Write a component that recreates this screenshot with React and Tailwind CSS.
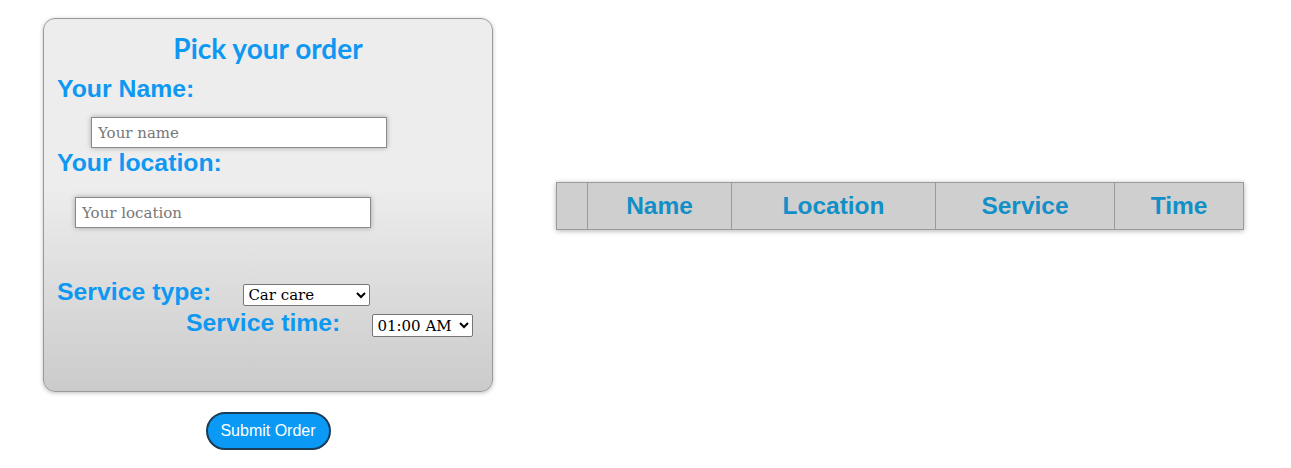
export default function App() {
  const label = "font-['Liberation_Sans',Arial,sans-serif] font-bold text-[24.8px] leading-[28px] text-[#0f98f2]";
  const th = "border border-[#9a9a9a] px-0 font-['Liberation_Sans',Arial,sans-serif] font-bold text-[24.5px] text-[#128fc6] text-center";
  return (
    <div className="flex items-start bg-white w-[1291px] h-[468px]">
      <div className="ml-[43px] mt-[18px] w-[450px] flex flex-col items-center">
        <div className="w-[450px] h-[374px] rounded-[12px] border border-[#999] shadow-[0_1px_4px_rgba(0,0,0,0.25)] bg-[linear-gradient(#ededed_45%,#cbcbcb)] flex flex-col items-stretch">
          <div className="pt-[11px] h-[47px] text-center font-['Lato',sans-serif] font-bold text-[28px] leading-[36px] text-[#0f98f2]">
            Pick your order
          </div>
          <div className={label + " mt-[9px] pl-[13px]"}>Your Name:</div>
          <input
            placeholder="Your name"
            className="mt-[14px] ml-[47px] w-[296px] h-[31px] bg-white border border-[#8a8a8a] shadow-[0_0_5px_rgba(0,0,0,0.3)] px-[6px] text-[15px] font-['DejaVu_Serif',serif] placeholder:text-[#777] outline-none"
          />
          <div className={label + " mt-[1px] pl-[13px]"}>Your location:</div>
          <input
            placeholder="Your location"
            className="mt-[20px] ml-[31px] w-[296px] h-[31px] bg-white border border-[#8a8a8a] shadow-[0_0_5px_rgba(0,0,0,0.3)] px-[6px] text-[15px] font-['DejaVu_Serif',serif] placeholder:text-[#777] outline-none"
          />
          <div className="mt-[50px] pl-[13px] flex items-start">
            <div className={label}>Service type:</div>
            <select className="ml-[32px] mt-[6px] w-[127px] h-[22px] bg-white border border-[#767676] rounded-[2px] text-[15px] font-['DejaVu_Serif',serif] text-black">
              <option>Car care</option>
            </select>
          </div>
          <div className="mt-[3px] pl-[142px] flex items-start">
            <div className={label}>Service time:</div>
            <select className="ml-[32px] mt-[5px] w-[101px] h-[23px] bg-white border border-[#767676] rounded-[2px] text-[15px] font-['DejaVu_Serif',serif] text-black">
              <option>01:00 AM</option>
            </select>
          </div>
        </div>
        <button className="mt-[20px] w-[125px] h-[38px] rounded-full bg-[#0a9af5] border-2 border-[#1c3b55] text-white text-[16px] font-['Liberation_Sans',Arial,sans-serif]">
          Submit Order
        </button>
      </div>
      <table className="ml-[63px] mt-[182px] border-collapse bg-[#cfcfcf] shadow-[0_1px_5px_rgba(0,0,0,0.3)]">
        <thead>
          <tr className="h-[47px]">
            <th className={th + " w-[31px]"}></th>
            <th className={th + " w-[144px]"}>Name</th>
            <th className={th + " w-[204px]"}>Location</th>
            <th className={th + " w-[179px]"}>Service</th>
            <th className={th + " w-[129px]"}>Time</th>
          </tr>
        </thead>
      </table>
    </div>
  );
}
